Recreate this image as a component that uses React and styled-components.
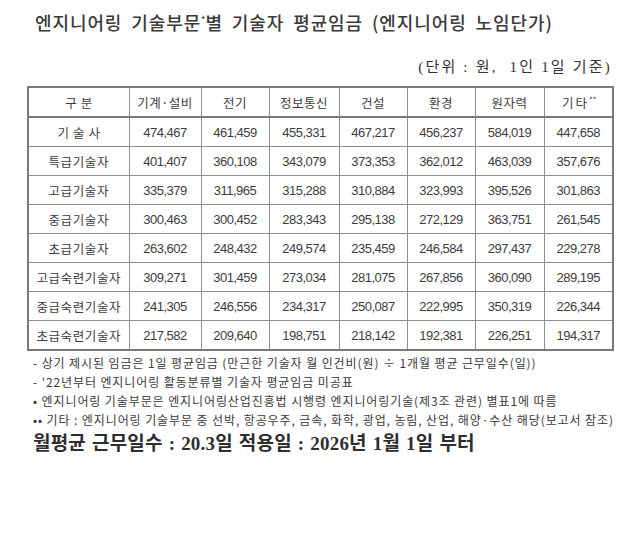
import React from "react";
import styled, { createGlobalStyle } from "styled-components";

const GlobalStyle = createGlobalStyle`
  html, body {
    margin: 0;
    padding: 0;
    background: #ffffff;
  }
  body {
    font-family: "Noto Sans CJK KR", "Liberation Sans", sans-serif;
    color: #333;
  }
`;

const columns = ["기계·설비", "전기", "정보통신", "건설", "환경", "원자력"];

const rows = [
  { label: "기술사", spaced: true, values: ["474,467", "461,459", "455,331", "467,217", "456,237", "584,019", "447,658"] },
  { label: "특급기술자", values: ["401,407", "360,108", "343,079", "373,353", "362,012", "463,039", "357,676"] },
  { label: "고급기술자", values: ["335,379", "311,965", "315,288", "310,884", "323,993", "395,526", "301,863"] },
  { label: "중급기술자", values: ["300,463", "300,452", "283,343", "295,138", "272,129", "363,751", "261,545"] },
  { label: "초급기술자", values: ["263,602", "248,432", "249,574", "235,459", "246,584", "297,437", "229,278"] },
  { label: "고급숙련기술자", values: ["309,271", "301,459", "273,034", "281,075", "267,856", "360,090", "289,195"] },
  { label: "중급숙련기술자", values: ["241,305", "246,556", "234,317", "250,087", "222,995", "350,319", "226,344"] },
  { label: "초급숙련기술자", values: ["217,582", "209,640", "198,751", "218,142", "192,381", "226,251", "194,317"] },
];

const notes = [
  "- 상기 제시된 임금은 1일 평균임금 (만근한 기술자 월 인건비(원) ÷ 1개월 평균 근무일수(일))",
  "- '22년부터 엔지니어링 활동분류별 기술자 평균임금 미공표",
  "• 엔지니어링 기술부문은 엔지니어링산업진흥법 시행령 엔지니어링기술(제3조 관련) 별표1에 따름",
  "•• 기타 : 엔지니어링 기술부문 중 선박, 항공우주, 금속, 화학, 광업, 농림, 산업, 해양·수산 해당(보고서 참조)",
];

const widths = [101, 72, 68, 70, 68, 68, 69, 69];

const App = () => {
  return (
    <Page>
      <GlobalStyle />
      <Title>
        엔지니어링 기술부문<Sup>*</Sup>별 기술자 평균임금 (엔지니어링 노임단가)
      </Title>
      <Unit>(단위 : 원,&nbsp; 1인 1일 기준)</Unit>
      <Table>
        <colgroup>
          {widths.map((w, i) => (
            <col key={i} style={{ width: w }} />
          ))}
        </colgroup>
        <thead>
          <tr>
            <HeadCell $spacing="4px">구분</HeadCell>
            {columns.map((c) => (
              <HeadCell key={c}>{c}</HeadCell>
            ))}
            <HeadCell $spacing="2px">
              기타<HeadSup>**</HeadSup>
            </HeadCell>
          </tr>
        </thead>
        <tbody>
          {rows.map((r) => (
            <tr key={r.label}>
              <LabelCell $spaced={r.spaced}>{r.label}</LabelCell>
              {r.values.map((v, i) => (
                <NumCell key={i}>{v}</NumCell>
              ))}
            </tr>
          ))}
        </tbody>
      </Table>
      <Notes>
        {notes.map((n) => (
          <Note key={n}>{n}</Note>
        ))}
      </Notes>
      <Footer>월평균 근무일수 : 20.3일 적용일 : 2026년 1월 1일 부터</Footer>
    </Page>
  );
};

const Page = styled.div`
  width: 640px;
  height: 538px;
  box-sizing: border-box;
  padding: 11px 28px 0 27px;
  display: flex;
  flex-direction: column;
`;

const Title = styled.h1`
  margin: 0 0 0 8px;
  font-size: 18px;
  font-weight: 500;
  line-height: 22px;
  color: #3a3a3a;
  letter-spacing: 0.9px;
  word-spacing: 4px;
  white-space: nowrap;
`;

const Sup = styled.sup`
  font-size: 9px;
  line-height: 0;
  letter-spacing: 0;
  vertical-align: 7px;
`;

const HeadSup = styled(Sup)`
  font-size: 8px;
  letter-spacing: 0;
  vertical-align: 5px;
`;

const Unit = styled.div`
  margin-top: 24px;
  align-self: flex-end;
  font-family: "Liberation Serif", "Noto Sans CJK KR", serif;
  font-size: 15px;
  line-height: 20px;
  letter-spacing: 2.2px;
  color: #333;
`;

const Table = styled.table`
  margin-top: 9px;
  width: 585px;
  border-collapse: collapse;
  table-layout: fixed;
  border: 2px solid #7a7a7a;
`;

const Cell = styled.td`
  height: 28px;
  padding: 0;
  border: 1px solid #8e8e8e;
  text-align: center;
  color: #3d3d3d;
  white-space: nowrap;
`;

const HeadCell = styled(Cell).attrs({ as: "th" })`
  font-size: 12.5px;
  font-weight: 400;
  border-bottom: 2px solid #7a7a7a;
  letter-spacing: ${(p) => p.$spacing || "0.5px"};
  text-indent: ${(p) => p.$spacing || "0"};
`;

const LabelCell = styled(Cell)`
  font-size: 12.5px;
  letter-spacing: ${(p) => (p.$spaced ? "4px" : "0.6px")};
  text-indent: ${(p) => (p.$spaced ? "4px" : "0")};
`;

const NumCell = styled(Cell)`
  font-family: "Liberation Sans", Arial, sans-serif;
  font-size: 13px;
  letter-spacing: -0.5px;
`;

const Notes = styled.div`
  margin-top: 2px;
  padding-left: 6px;
  display: flex;
  flex-direction: column;
`;

const Note = styled.div`
  font-size: 12px;
  line-height: 19px;
  letter-spacing: 0.9px;
  color: #3a3a3a;
  white-space: nowrap;
`;

const Footer = styled.div`
  margin-top: 3px;
  padding-left: 6px;
  font-family: "Liberation Serif", "Noto Sans CJK KR", serif;
  font-size: 19px;
  font-weight: 600;
  line-height: 24px;
  letter-spacing: 0.2px;
  word-spacing: 1px;
  color: #2e2e2e;
  white-space: nowrap;
`;

export default App;
